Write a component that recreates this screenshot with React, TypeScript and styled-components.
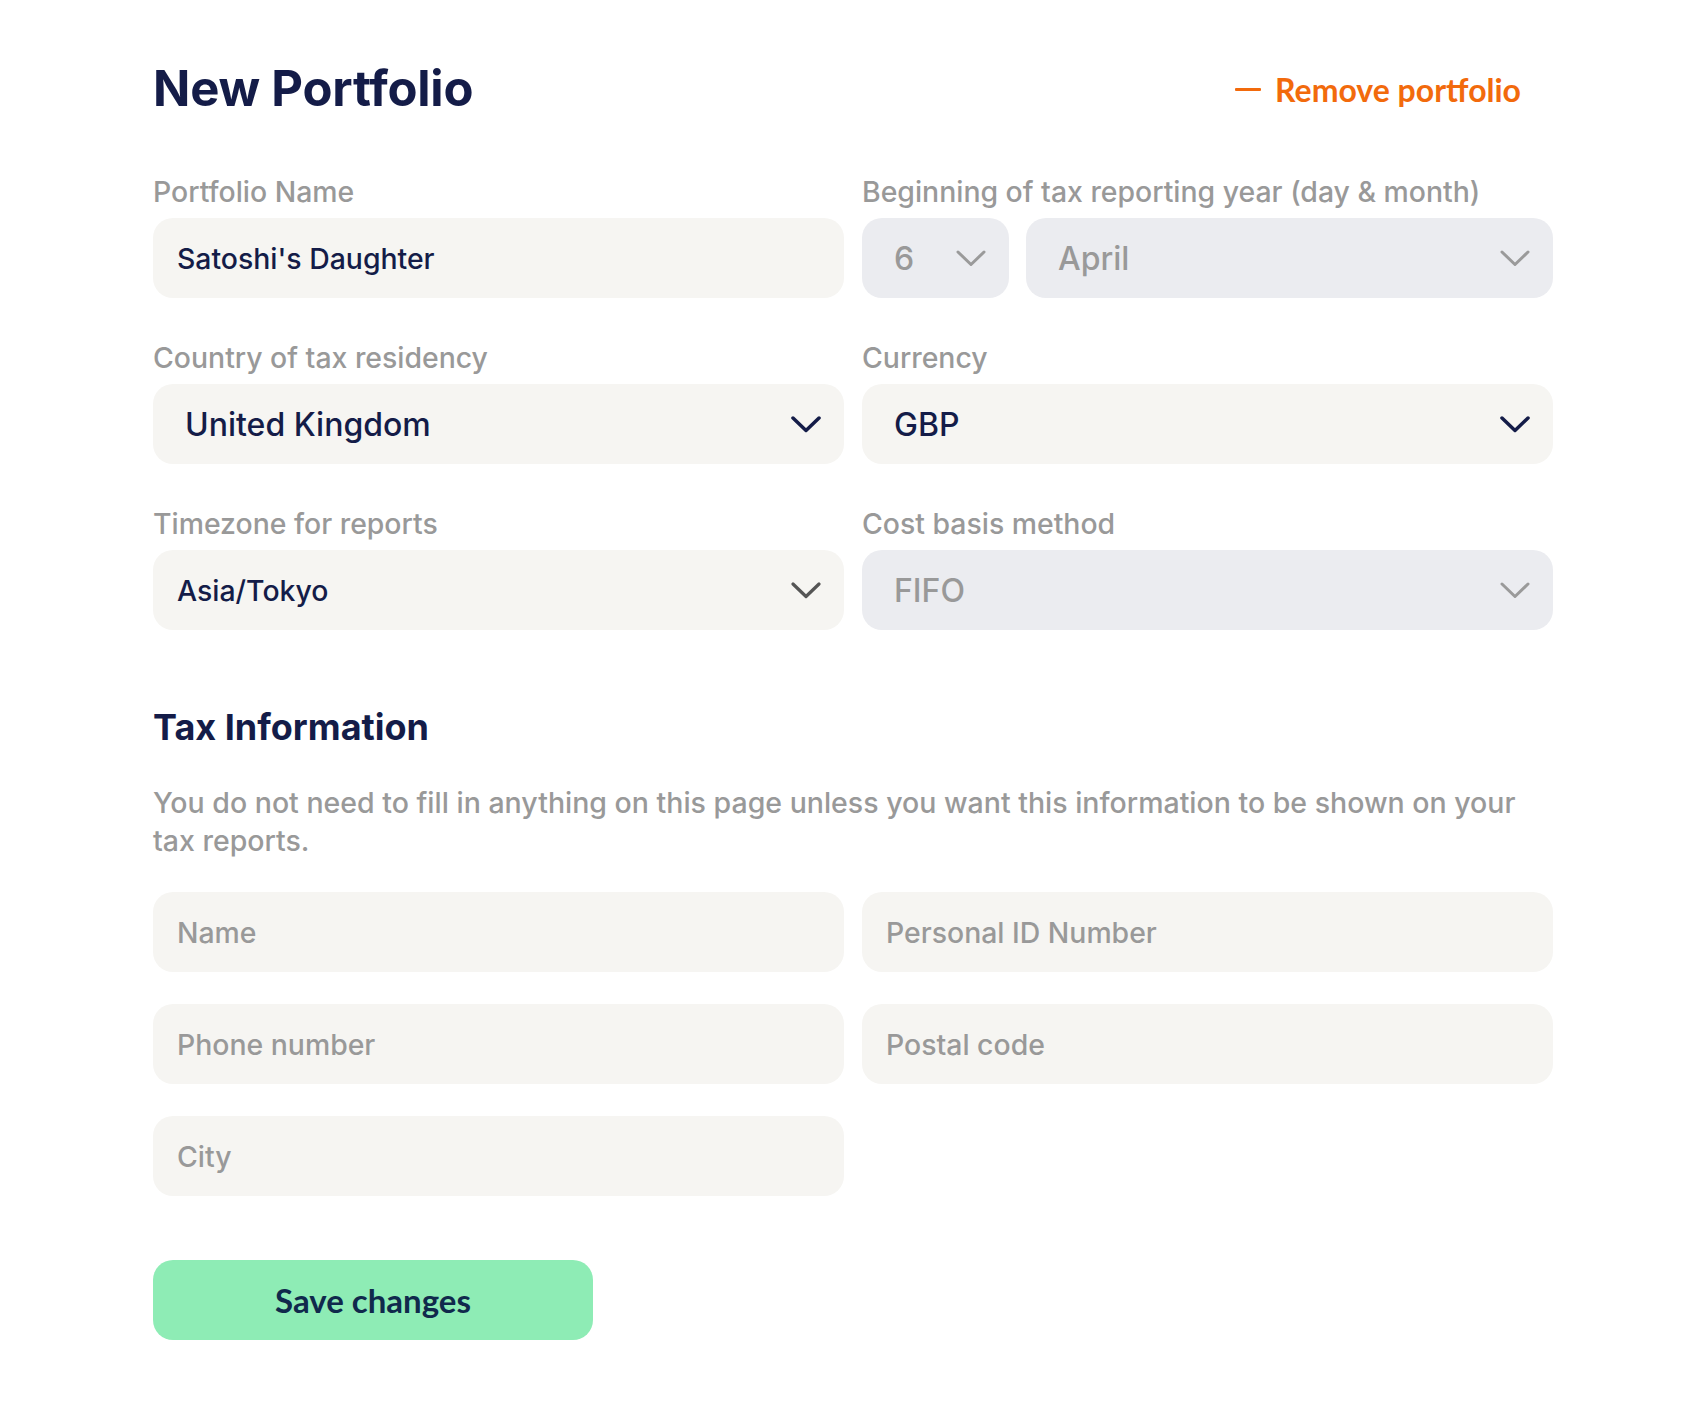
import React from "react";
import styled, { createGlobalStyle } from "styled-components";

const Global = createGlobalStyle`
  html, body { margin: 0; padding: 0; background: #ffffff; }
  body { font-family: Inter, "Noto Sans", sans-serif; -webkit-font-smoothing: antialiased; }
  * { box-sizing: border-box; }
`;

const NAVY = "#141c48";
const GRAY = "#999999";

const Page = styled.div`
  width: 1400px;
  margin-left: 153px;
  padding-top: 59px;
  padding-bottom: 78px;
`;

const Header = styled.div`
  display: flex;
  align-items: center;
  justify-content: space-between;
  padding-right: 32px;
  margin-bottom: 56px;
`;

const Title = styled.h1`
  margin: 0;
  font-family: Inter, sans-serif;
  font-weight: 700;
  font-size: 49px;
  line-height: 60px;
  color: ${NAVY};
  letter-spacing: -0.2px;
`;

const RemoveLink = styled.a`
  display: flex;
  align-items: center;
  gap: 14px;
  font-family: Lato, sans-serif;
  font-weight: 700;
  font-size: 32px;
  color: #f26a0c;
  text-decoration: none;
  cursor: pointer;
`;

const Dash = styled.span`
  display: block;
  width: 26px;
  height: 3px;
  background: #f26a0c;
  border-radius: 1px;
`;

const Grid = styled.div<{ $rowGap: number }>`
  display: grid;
  grid-template-columns: 691px 691px;
  column-gap: 18px;
  row-gap: ${(p) => p.$rowGap}px;
`;

const Field = styled.div`
  display: flex;
  flex-direction: column;
`;

const Label = styled.label`
  font-family: Inter, sans-serif;
  font-weight: 500;
  font-size: 28.4px;
  line-height: 34px;
  color: ${GRAY};
  margin-bottom: 9px;
  white-space: nowrap;
`;

const Inline = styled.div`
  display: flex;
  gap: 17px;
`;

const Control = styled.div<{ $disabled?: boolean; $large?: boolean; $width?: number; $grow?: boolean }>`
  display: flex;
  align-items: center;
  justify-content: space-between;
  height: 80px;
  flex: ${(p) => (p.$grow ? "1 1 0" : "none")};
  ${(p) => (p.$width ? `width: ${p.$width}px;` : "")}
  border-radius: 20px;
  background: ${(p) => (p.$disabled ? "#ebecf0" : "#f6f5f2")};
  padding: ${(p) => (p.$large ? "0 23px 0 32px" : "0 23px 0 24px")};
  font-family: Inter, sans-serif;
  font-weight: 500;
  font-size: ${(p) => (p.$large ? "32px" : "28.4px")};
  color: ${(p) => (p.$disabled ? GRAY : NAVY)};
`;

const Value = styled.span<{ $placeholder?: boolean }>`
  color: ${(p) => (p.$placeholder ? GRAY : "inherit")};
  padding-top: 1px;
`;

const Chevron = styled.svg`
  flex: none;
  width: 30px;
  height: 17px;
`;

const SectionTitle = styled.h2`
  margin: 75px 0 0;
  font-family: Inter, sans-serif;
  font-weight: 700;
  font-size: 36px;
  line-height: 44px;
  color: ${NAVY};
`;

const Paragraph = styled.p`
  margin: 35px 0 32px;
  font-family: Inter, sans-serif;
  font-weight: 500;
  font-size: 28.5px;
  line-height: 38px;
  color: ${GRAY};
  padding-right: 20px;
`;

const SaveButton = styled.button`
  display: block;
  margin-top: 64px;
  width: 440px;
  height: 80px;
  border: none;
  border-radius: 20px;
  background: #8eecb5;
  font-family: Lato, sans-serif;
  font-weight: 700;
  font-size: 33px;
  color: #10294c;
  cursor: pointer;
`;

const ChevronIcon = ({ color, sw }: { color: string; sw: number }) => (
  <Chevron viewBox="0 0 30 17" fill="none">
    <polyline points="2,2 15,14.5 28,2" stroke={color} strokeWidth={sw} strokeLinecap="round" strokeLinejoin="round" />
  </Chevron>
);

export default function App() {
  return (
    <>
      <Global />
      <Page>
        <Header>
          <Title>New Portfolio</Title>
          <RemoveLink>
            <Dash />
            Remove portfolio
          </RemoveLink>
        </Header>

        <Grid $rowGap={43}>
          <Field>
            <Label>Portfolio Name</Label>
            <Control>
              <Value>Satoshi's Daughter</Value>
            </Control>
          </Field>
          <Field>
            <Label>Beginning of tax reporting year (day &amp; month)</Label>
            <Inline>
              <Control $disabled $large $width={147}>
                <Value>6</Value>
                <ChevronIcon color="#9a9a9a" sw={3} />
              </Control>
              <Control $disabled $large $grow>
                <Value>April</Value>
                <ChevronIcon color="#9a9a9a" sw={3} />
              </Control>
            </Inline>
          </Field>

          <Field>
            <Label>Country of tax residency</Label>
            <Control $large>
              <Value>United Kingdom</Value>
              <ChevronIcon color={NAVY} sw={3.5} />
            </Control>
          </Field>
          <Field>
            <Label>Currency</Label>
            <Control $large>
              <Value>GBP</Value>
              <ChevronIcon color={NAVY} sw={3.5} />
            </Control>
          </Field>

          <Field>
            <Label>Timezone for reports</Label>
            <Control>
              <Value>Asia/Tokyo</Value>
              <ChevronIcon color="#555555" sw={3.2} />
            </Control>
          </Field>
          <Field>
            <Label>Cost basis method</Label>
            <Control $disabled $large>
              <Value>FIFO</Value>
              <ChevronIcon color="#9a9a9a" sw={3} />
            </Control>
          </Field>
        </Grid>

        <SectionTitle>Tax Information</SectionTitle>
        <Paragraph>
          You do not need to fill in anything on this page unless you want this information to be shown on your tax reports.
        </Paragraph>

        <Grid $rowGap={32}>
          <Control>
            <Value $placeholder>Name</Value>
          </Control>
          <Control>
            <Value $placeholder>Personal ID Number</Value>
          </Control>
          <Control>
            <Value $placeholder>Phone number</Value>
          </Control>
          <Control>
            <Value $placeholder>Postal code</Value>
          </Control>
          <Control>
            <Value $placeholder>City</Value>
          </Control>
        </Grid>

        <SaveButton>Save changes</SaveButton>
      </Page>
    </>
  );
}
